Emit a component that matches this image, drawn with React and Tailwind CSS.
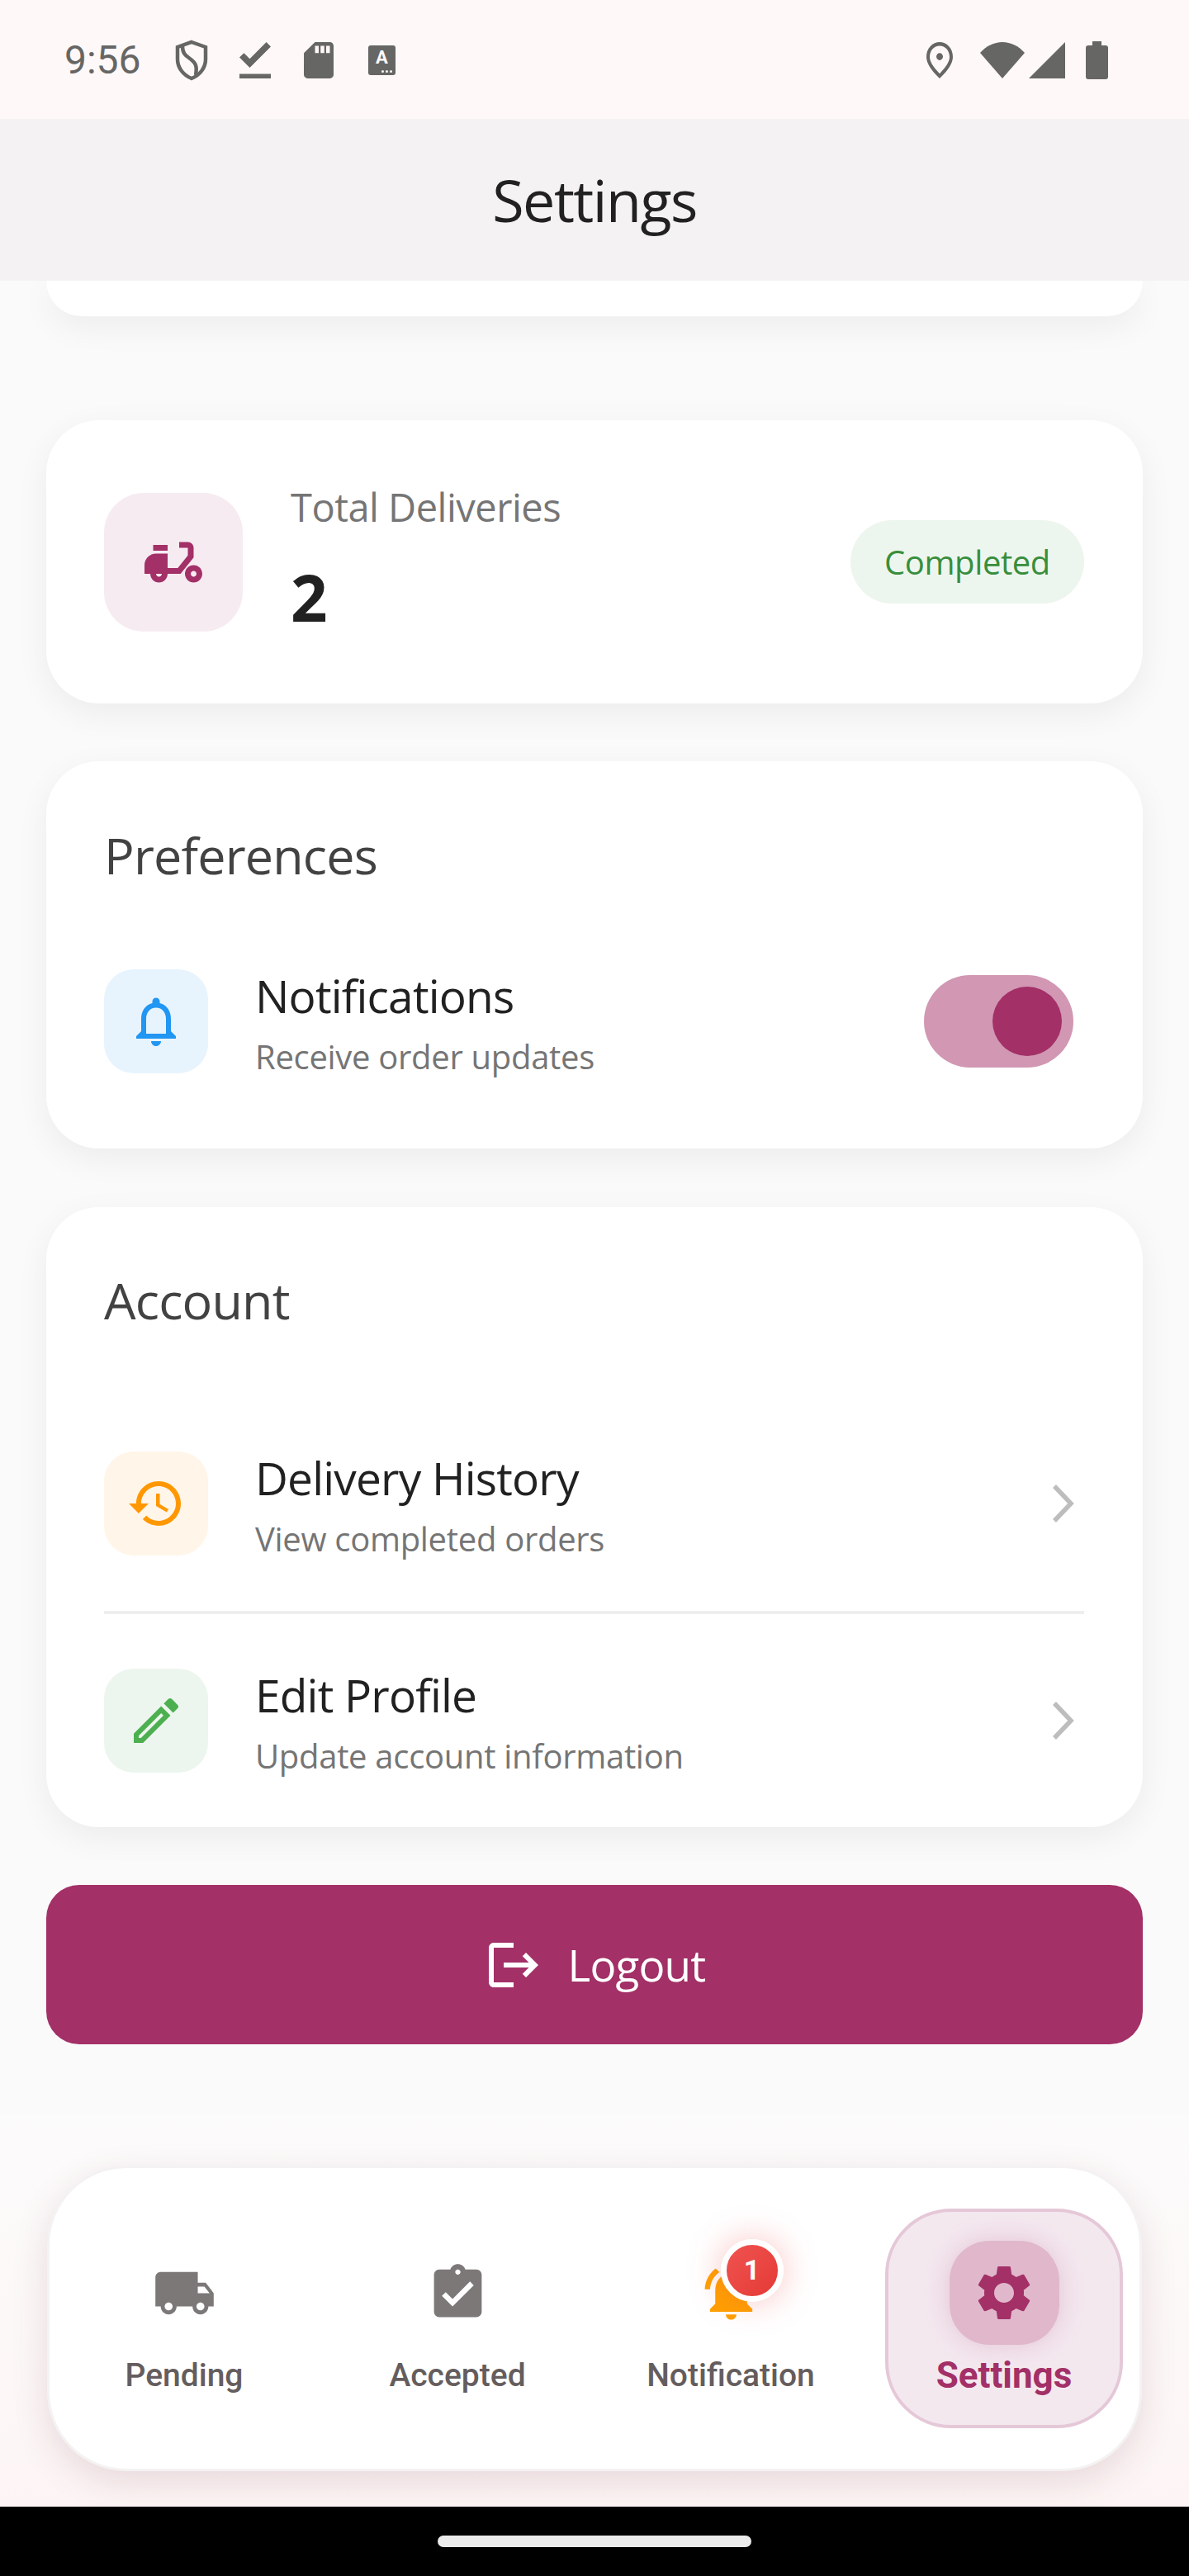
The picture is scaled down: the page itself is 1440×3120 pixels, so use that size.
import React from "react";

function Icon({ d, size = 72, className = "" }) {
  return (
    <svg viewBox="0 0 24 24" width={size} height={size} className={`shrink-0 ${className}`} fill="currentColor">
      <path d={d} />
    </svg>
  );
}

const paths = {
  moped:
    "M19 7c0-1.1-.9-2-2-2h-3v2h3v2.65L13.52 14H10V9H6c-2.21 0-4 1.79-4 4v3h2c0 1.66 1.34 3 3 3s3-1.34 3-3h4.48L19 10.35V7zM7 17c-.55 0-1-.45-1-1h2c0 .55-.45 1-1 1zM5 6h5v2H5zM19 13c-1.66 0-3 1.34-3 3s1.34 3 3 3 3-1.34 3-3-1.34-3-3-3zm0 4c-.55 0-1-.45-1-1s.45-1 1-1 1 .45 1 1-.45 1-1 1z",
  bell:
    "M12 22c1.1 0 2-.9 2-2h-4c0 1.1.9 2 2 2zm6-6v-5c0-3.07-1.63-5.64-4.5-6.32V4c0-.83-.67-1.5-1.5-1.5s-1.5.67-1.5 1.5v.68C7.64 5.36 6 7.92 6 11v5l-2 2v1h16v-1l-2-2zm-2 1H8v-6c0-2.48 1.51-4.5 4-4.5s4 2.02 4 4.5v6z",
  history:
    "M13 3c-4.97 0-9 4.03-9 9H1l3.89 3.89.07.14L9 12H6c0-3.87 3.13-7 7-7s7 3.13 7 7-3.13 7-7 7c-1.93 0-3.68-.79-4.94-2.06l-1.42 1.42C8.27 19.99 10.51 21 13 21c4.97 0 9-4.03 9-9s-4.03-9-9-9zm-1 5v5l4.28 2.54.72-1.21-3.5-2.08V8H12z",
  edit:
    "M3 17.25V21h3.75L17.81 9.94l-3.75-3.75L3 17.25zM5.92 19H5v-.92l9.06-9.06.92.92L5.92 19zM20.71 5.63l-2.34-2.34c-.2-.2-.45-.29-.71-.29s-.51.1-.7.29l-1.83 1.83 3.75 3.75 1.83-1.83c.39-.39.39-1.02 0-1.41z",
  logout:
    "M17 7l-1.41 1.41L18.17 11H8v2h10.17l-2.58 2.58L17 17l5-5zM4 5h8V3H4c-1.1 0-2 .9-2 2v14c0 1.1.9 2 2 2h8v-2H4V5z",
  truck:
    "M20 8h-3V4H3c-1.1 0-2 .9-2 2v11h2c0 1.66 1.34 3 3 3s3-1.34 3-3h6c0 1.66 1.34 3 3 3s3-1.34 3-3h2v-5l-3-4zM6 18.5c-.83 0-1.5-.67-1.5-1.5s.67-1.5 1.5-1.5 1.5.67 1.5 1.5-.67 1.5-1.5 1.5zm13.5-9l1.96 2.5H17V9.5h2.5zm-1.5 9c-.83 0-1.5-.67-1.5-1.5s.67-1.5 1.5-1.5 1.5.67 1.5 1.5-.67 1.5-1.5 1.5z",
  clipboard:
    "M19 3h-4.18C14.4 1.84 13.3 1 12 1c-1.3 0-2.4.84-2.82 2H5c-1.1 0-2 .9-2 2v14c0 1.1.9 2 2 2h14c1.1 0 2-.9 2-2V5c0-1.1-.9-2-2-2zm-7 0c.55 0 1 .45 1 1s-.45 1-1 1-1-.45-1-1 .45-1 1-1zm-2 14l-4-4 1.41-1.41L10 14.17l6.59-6.59L18 9l-8 8z",
  ringing:
    "M7.58 4.08L6.15 2.65C3.75 4.48 2.17 7.3 2.03 10.5h2c.15-2.65 1.51-4.97 3.55-6.42zm12.39 6.42h2c-.15-3.2-1.73-6.02-4.12-7.85l-1.42 1.43c2.02 1.45 3.39 3.77 3.54 6.42zM18 11c0-3.07-1.64-5.64-4.5-6.32V4c0-.83-.67-1.5-1.5-1.5s-1.5.67-1.5 1.5v.68C7.63 5.36 6 7.92 6 11v5l-2 2v1h16v-1l-2-2v-5zm-6 11c.14 0 .27-.01.4-.04.65-.14 1.18-.58 1.44-1.18.1-.24.15-.5.15-.78h-4c.01 1.1.9 2 2.01 2z",
  gear:
    "M19.14 12.94c.04-.3.06-.61.06-.94 0-.32-.02-.64-.07-.94l2.03-1.58c.18-.14.23-.41.12-.61l-1.92-3.32c-.12-.22-.37-.29-.59-.22l-2.39.96c-.5-.38-1.03-.7-1.62-.94l-.36-2.54c-.04-.24-.24-.41-.48-.41h-3.84c-.24 0-.43.17-.47.41l-.36 2.54c-.59.24-1.13.57-1.62.94l-2.39-.96c-.22-.08-.47 0-.59.22L2.74 8.87c-.12.21-.08.47.12.61l2.03 1.58c-.05.3-.09.63-.09.94s.02.64.07.94l-2.03 1.58c-.18.14-.23.41-.12.61l1.92 3.32c.12.22.37.29.59.22l2.39-.96c.5.38 1.03.7 1.62.94l.36 2.54c.05.24.24.41.48.41h3.84c.24 0 .44-.17.47-.41l.36-2.54c.59-.24 1.13-.56 1.62-.94l2.39.96c.22.08.47 0 .59-.22l1.92-3.32c.12-.22.07-.47-.12-.61l-2.01-1.58zM12 15.6c-1.98 0-3.6-1.62-3.6-3.6s1.62-3.6 3.6-3.6 3.6 1.62 3.6 3.6-1.62 3.6-3.6 3.6z",
};

function StatusBar() {
  return (
    <div className="h-[144px] shrink-0 bg-[#fff8f8] flex items-center justify-between pl-[78px] pr-[98px] pt-[1px] text-[#666665]">
      <div className="flex items-center">
        <span className="font-['Roboto',sans-serif] text-[48px] leading-[56px] w-[134px]">9:56</span>
        <svg width="40" height="50" viewBox="0 0 40 50" fill="none" stroke="currentColor" strokeWidth="4.5">
          <path d="M20 3 37 9v15c0 10-7 19-17 23C10 43 3 34 3 24V9z" />
          <path d="M9 8c0 8 3 11 9 15 7 5 9 9 7 20" />
        </svg>
        <svg className="ml-[38px]" width="38" height="44" viewBox="5 4 14 16" preserveAspectRatio="none" fill="currentColor">
          <path d="M5 18h14v2H5v-2zm4.6-2.7L5 10.7l2-1.9 2.6 2.6L17 4l2 2-9.4 9.3z" />
        </svg>
        <svg className="ml-[40px]" width="36" height="44" viewBox="4 2 16 20" preserveAspectRatio="none" fill="currentColor">
          <path d="M18 2h-8L4.02 8 4 20c0 1.1.9 2 2 2h12c1.1 0 2-.9 2-2V4c0-1.1-.9-2-2-2zm-6 6h-2V4h2v4zm3 0h-2V4h2v4zm3 0h-2V4h2v4z" />
        </svg>
        <div className="ml-[42px] w-[33px] h-[36px] rounded-[3px] bg-[#666665] flex items-center justify-center relative">
          <span className="font-['Roboto',sans-serif] font-bold text-[22px] leading-none text-[#fff8f8] -mt-[5px]">A</span>
          <span className="absolute bottom-[3px] right-[4px] flex gap-[2px]">
            <span className="w-[3px] h-[3px] rounded-full bg-[#fff8f8]" />
            <span className="w-[3px] h-[3px] rounded-full bg-[#fff8f8]" />
            <span className="w-[3px] h-[3px] rounded-full bg-[#fff8f8]" />
          </span>
        </div>
      </div>
      <div className="flex items-center">
        <svg width="32" height="44" viewBox="4 2 16 20" preserveAspectRatio="none" fill="currentColor">
          <path d="M12 12c-1.1 0-2-.9-2-2s.9-2 2-2 2 .9 2 2-.9 2-2 2zm6-1.8C18 6.57 15.35 4 12 4s-6 2.57-6 6.2c0 2.34 1.95 5.44 6 9.14 4.05-3.7 6-6.8 6-9.14zM12 2c4.2 0 8 3.22 8 8.2 0 3.32-2.67 7.25-8 11.8-5.33-4.55-8-8.48-8-11.8C4 5.22 7.8 2 12 2z" />
        </svg>
        <svg className="ml-[33px]" width="54" height="44" viewBox="0 0 54 44" fill="currentColor">
          <path d="M27 44 0 13C7 5 17 0 27 0s20 5 27 13z" />
        </svg>
        <svg className="ml-[5px]" width="44" height="44" viewBox="0 0 44 44" fill="currentColor">
          <path d="M44 0v44H0z" />
        </svg>
        <svg className="ml-[25px]" width="27" height="46" viewBox="0 0 27 46" fill="currentColor">
          <path d="M8 0h11v5h5a3 3 0 0 1 3 3v35a3 3 0 0 1-3 3H3a3 3 0 0 1-3-3V8a3 3 0 0 1 3-3h5z" />
        </svg>
      </div>
    </div>
  );
}

function Card({ children, className = "" }) {
  return <div className={`bg-white rounded-[64px] shadow-[0_12px_40px_rgba(0,0,0,0.06)] ${className}`}>{children}</div>;
}

function IconBox({ tint, color, d }) {
  return (
    <div className={`w-[126px] h-[126px] shrink-0 rounded-[36px] flex items-center justify-center ${tint} ${color}`}>
      <Icon d={d} size={72} />
    </div>
  );
}

function RowText({ title, sub }) {
  return (
    <div className="ml-[57px] flex-1 h-[126px] pt-[4px] flex flex-col justify-center">
      <span className="text-[55px] leading-[68px] text-[#212121] tracking-[-0.8px]">{title}</span>
      <span className="text-[40px] leading-[52px] text-[#757575] mt-[14px] tracking-[-0.3px]">{sub}</span>
    </div>
  );
}

function Chevron() {
  return (
    <svg width="28" height="48" viewBox="0 0 28 48" fill="none" stroke="#bdbdbd" strokeWidth="5.5" className="shrink-0 mr-[12px]">
      <path d="M4 3 24 24 4 45" />
    </svg>
  );
}

function NavItem({ label, d, active, children }) {
  return (
    <div
      className={`h-[266px] rounded-[80px] flex flex-col items-center ${
        active ? "bg-[#f4e8ef] border-[4px] border-[#e5c8d7] pt-[35px]" : "pt-[39px]"
      }`}
    >
      <div
        className={`relative w-[133px] h-[126px] rounded-[48px] flex items-center justify-center ${
          active ? "bg-[#e0b7cb] shadow-[0_0_32px_rgba(163,48,103,0.2)] text-[#a33067]" : "text-[#7d7878]"
        }`}
      >
        {children || <Icon d={d} size={active ? 80 : 77} />}
      </div>
      <span
        className={`font-['Roboto',sans-serif] leading-[44px] mt-[15px] ${
          active ? "text-[44px] font-bold text-[#a33067]" : "text-[39px] font-medium text-[#655d5d]"
        }`}
      >
        {label}
      </span>
    </div>
  );
}

export default function App() {
  return (
    <div className="w-[1440px] h-[3120px] flex flex-col overflow-hidden bg-[#fafafa] font-['Open_Sans',sans-serif]">
      <StatusBar />
      <div className="h-[196px] shrink-0 bg-[#f5f2f3] flex items-center justify-center z-10">
        <h1 className="text-[70px] leading-[80px] text-[#212121] tracking-[-1.5px]">Settings</h1>
      </div>

      <div className="flex-1 px-[56px] flex flex-col min-h-0">
        {/* scrolled-off card */}
        <div className="h-[43px] shrink-0 bg-white rounded-b-[64px] shadow-[0_12px_40px_rgba(0,0,0,0.06)]" />

        <Card className="mt-[126px] h-[343px] shrink-0 flex items-center pl-[70px] pr-[71px]">
          <div className="w-[168px] h-[168px] rounded-[48px] bg-[#f6ebf1] text-[#a33067] flex items-center justify-center">
            <Icon d={paths.moped} size={84} />
          </div>
          <div className="ml-[58px] flex-1 flex flex-col pb-[6px]">
            <span className="text-[47px] leading-[56px] text-[#757575] tracking-[-0.5px]">Total Deliveries</span>
            <span className="mt-[35px] text-[78px] leading-[92px] font-bold text-[#212121]">2</span>
          </div>
          <div className="h-[101px] w-[283px] rounded-full bg-[#edf6ee] text-[#388e3c] text-[40px] flex items-center justify-center tracking-[-0.4px]">
            Completed
          </div>
        </Card>

        <Card className="mt-[70px] h-[469px] shrink-0 pl-[70px] pr-[71px] pt-[78px]">
          <div className="text-[61px] leading-[72px] text-[#424242] tracking-[-0.8px]">Preferences</div>
          <div className="mt-[102px] flex items-center">
            <IconBox tint="bg-[#e8f4fd]" color="text-[#2196f3]" d={paths.bell} />
            <RowText title="Notifications" sub="Receive order updates" />
            <div className="w-[181px] h-[112px] mr-[13px] rounded-full bg-[#d197b3] flex items-center justify-end pr-[14px]">
              <div className="w-[84px] h-[84px] rounded-full bg-[#a33067]" />
            </div>
          </div>
        </Card>

        <Card className="mt-[71px] h-[751px] shrink-0 pl-[70px] pr-[71px] pt-[77px]">
          <div className="text-[61px] leading-[72px] text-[#424242] tracking-[-0.8px]">Account</div>
          <div className="mt-[147px] flex items-center">
            <IconBox tint="bg-[#fff5e9]" color="text-[#ff9800]" d={paths.history} />
            <RowText title="Delivery History" sub="View completed orders" />
            <Chevron />
          </div>
          <div className="mt-[67px] mb-[66px] h-[4px] bg-[#eeeeee]" />
          <div className="flex items-center">
            <IconBox tint="bg-[#edf6ee]" color="text-[#4caf50]" d={paths.edit} />
            <RowText title="Edit Profile" sub="Update account information" />
            <Chevron />
          </div>
        </Card>

        <button className="mt-[70px] h-[193px] shrink-0 rounded-[40px] bg-[#a33067] text-white flex items-center justify-center gap-[30px]">
          <Icon d={paths.logout} size={72} />
          <span className="text-[53px] leading-[68px] tracking-[-0.8px]">Logout</span>
        </button>
      </div>

      {/* bottom nav */}
      <div className="h-[476px] shrink-0 pt-[63px] px-[57px] bg-gradient-to-b from-[#fcfbfb] to-[#fdf5f5]">
        <div className="h-[370px] rounded-[96px] bg-white border-[3px] border-[#f4f2f2] shadow-[0_14px_44px_rgba(90,30,50,0.13)] pl-[19px] pr-[20px] pt-[49px] grid grid-cols-4 gap-x-[43px] items-start">
          <NavItem label="Pending" d={paths.truck} />
          <NavItem label="Accepted" d={paths.clipboard} />
          <NavItem label="Notification">
            <div className="relative">
              <Icon d={paths.ringing} size={77} className="text-[#ffa000]" />
              <div className="absolute -top-[27px] left-[26px] w-[76px] h-[76px] rounded-full bg-gradient-to-br from-[#ef5350] to-[#e53935] border-[7px] border-white shadow-[0_0_40px_rgba(239,83,80,0.35)] flex items-center justify-center font-['Roboto',sans-serif] font-bold text-[34px] text-white">
                1
              </div>
            </div>
          </NavItem>
          <NavItem label="Settings" d={paths.gear} active />
        </div>
      </div>

      <div className="h-[84px] shrink-0 bg-black flex items-center justify-center">
        <div className="w-[380px] h-[14px] rounded-full bg-[#ebebeb] -mt-[1px]" />
      </div>
    </div>
  );
}
